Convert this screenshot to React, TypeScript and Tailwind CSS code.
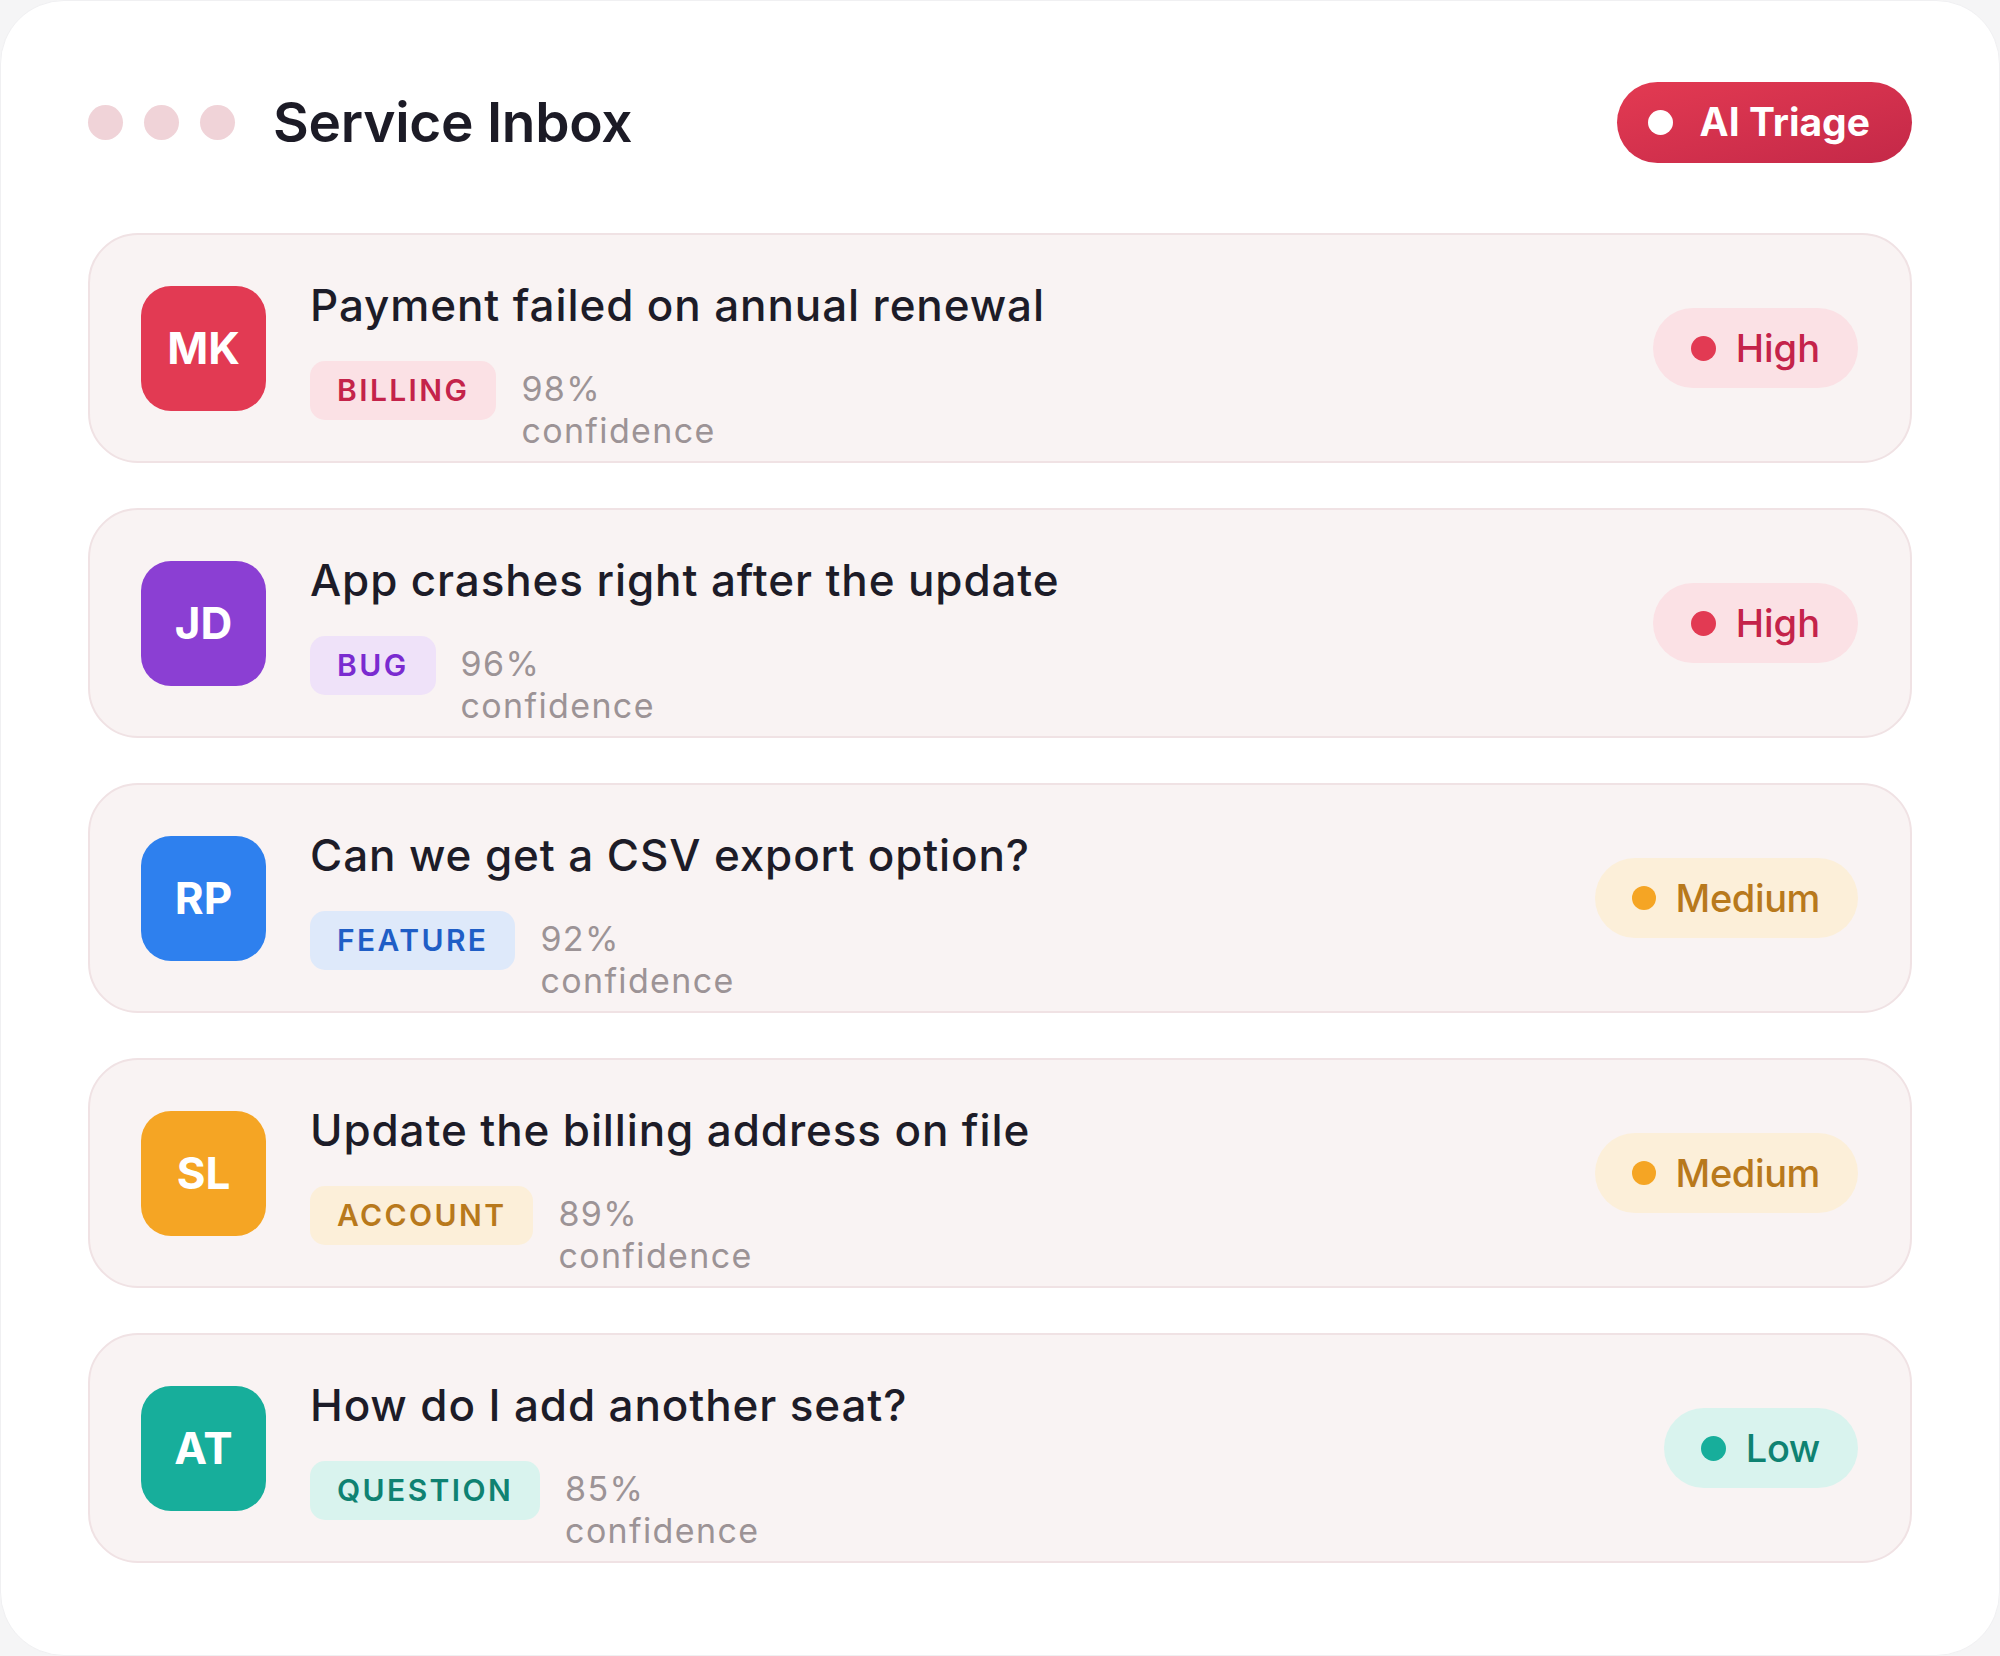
import React from "react";

type Ticket = {
  initials: string;
  avatar: string;
  title: string;
  tag: string;
  tagBg: string;
  tagText: string;
  conf: string;
  pri: "High" | "Medium" | "Low";
};

const tickets: Ticket[] = [
  { initials: "MK", avatar: "bg-[#e23a53]", title: "Payment failed on annual renewal", tag: "BILLING", tagBg: "bg-[#fbe1e5]", tagText: "text-[#c4234a]", conf: "98%", pri: "High" },
  { initials: "JD", avatar: "bg-[#8b3fd3]", title: "App crashes right after the update", tag: "BUG", tagBg: "bg-[#efe2f9]", tagText: "text-[#7a2bd0]", conf: "96%", pri: "High" },
  { initials: "RP", avatar: "bg-[#2e80ee]", title: "Can we get a CSV export option?", tag: "FEATURE", tagBg: "bg-[#dee9fa]", tagText: "text-[#1f5ec6]", conf: "92%", pri: "Medium" },
  { initials: "SL", avatar: "bg-[#f5a524]", title: "Update the billing address on file", tag: "ACCOUNT", tagBg: "bg-[#fcefd9]", tagText: "text-[#b8791c]", conf: "89%", pri: "Medium" },
  { initials: "AT", avatar: "bg-[#17ae9b]", title: "How do I add another seat?", tag: "QUESTION", tagBg: "bg-[#d9f3ee]", tagText: "text-[#0f8272]", conf: "85%", pri: "Low" },
];

function Priority({ level }: { level: Ticket["pri"] }) {
  if (level === "High")
    return (
      <div className="flex h-[80px] items-center gap-[20px] rounded-full bg-[#fbe1e5] pl-[38px] pr-[38px]">
        <span className="h-[25px] w-[25px] rounded-full bg-[#e23a53]" />
        <span className="text-[38px] font-medium text-[#c4234a]">High</span>
      </div>
    );
  if (level === "Medium")
    return (
      <div className="flex h-[80px] items-center gap-[20px] rounded-full bg-[#fcefd9] pl-[37px] pr-[38px]">
        <span className="h-[24px] w-[24px] rounded-full bg-[#f5a524]" />
        <span className="text-[38px] font-medium tracking-[-0.01em] text-[#b8791c]">Medium</span>
      </div>
    );
  return (
    <div className="flex h-[80px] items-center gap-[20px] rounded-full bg-[#d9f3ee] pl-[37px] pr-[38px]">
      <span className="h-[25px] w-[25px] rounded-full bg-[#17ae9b]" />
      <span className="text-[38px] font-medium tracking-[-0.01em] text-[#0f8272]">Low</span>
    </div>
  );
}

function Card({ t }: { t: Ticket }) {
  return (
    <div className="flex h-[230px] items-center rounded-[50px] border-2 border-[#f0e2e4] bg-[#f9f3f3] pl-[51px] pr-[52px]">
      <div className={`flex h-[125px] w-[125px] shrink-0 items-center justify-center rounded-[30px] ${t.avatar}`}>
        <span className="text-[44px] font-bold text-white">{t.initials}</span>
      </div>
      <div className="ml-[44px] flex min-w-0 flex-1 flex-col">
        <div className="text-[44px] font-medium leading-[56px] tracking-[0.02em] text-[#1d1c28]">{t.title}</div>
        <div className="mt-[28px] flex h-[59px] items-baseline gap-[25px]">
          <span className={`flex h-[59px] items-center rounded-[15px] px-[27px] text-[30px] font-semibold tracking-[0.08em] ${t.tagBg} ${t.tagText}`}>
            {t.tag}
          </span>
          <span className="flex flex-col text-[34px] tracking-[0.04em] text-[#9c9396]">
            <span className="block h-[42px] leading-[42px]">{t.conf}</span>
            <span className="block h-[42px] leading-[42px]">confidence</span>
          </span>
        </div>
      </div>
      <Priority level={t.pri} />
    </div>
  );
}

export default function App() {
  return (
    <div className="min-h-[1656px] w-[2000px] bg-[#f5f5f6] font-['Inter','Noto_Sans',sans-serif]">
      <div className="flex h-[1656px] w-[2000px] flex-col rounded-[64px] border border-[#f0f0f2] bg-white px-[87px] pt-[81px]">
        <div className="flex h-[81px] items-center">
          <div className="flex items-center gap-[21px]">
            <span className="h-[35px] w-[35px] rounded-full bg-[#f0d3d8]" />
            <span className="h-[35px] w-[35px] rounded-full bg-[#f0d3d8]" />
            <span className="h-[35px] w-[35px] rounded-full bg-[#f0d3d8]" />
          </div>
          <h1 className="ml-[38px] text-[55px] font-semibold tracking-[-0.005em] text-[#1c1b26]">Service Inbox</h1>
          <div className="ml-auto flex h-[81px] items-center gap-[27px] rounded-full bg-gradient-to-br from-[#e33a52] to-[#c42848] pl-[31px] pr-[42px]">
            <span className="h-[25px] w-[25px] rounded-full bg-white" />
            <span className="text-[39px] font-bold text-white">AI Triage</span>
          </div>
        </div>
        <div className="mt-[70px] flex flex-col gap-[45px]">
          {tickets.map((t) => (
            <Card key={t.initials} t={t} />
          ))}
        </div>
      </div>
    </div>
  );
}
